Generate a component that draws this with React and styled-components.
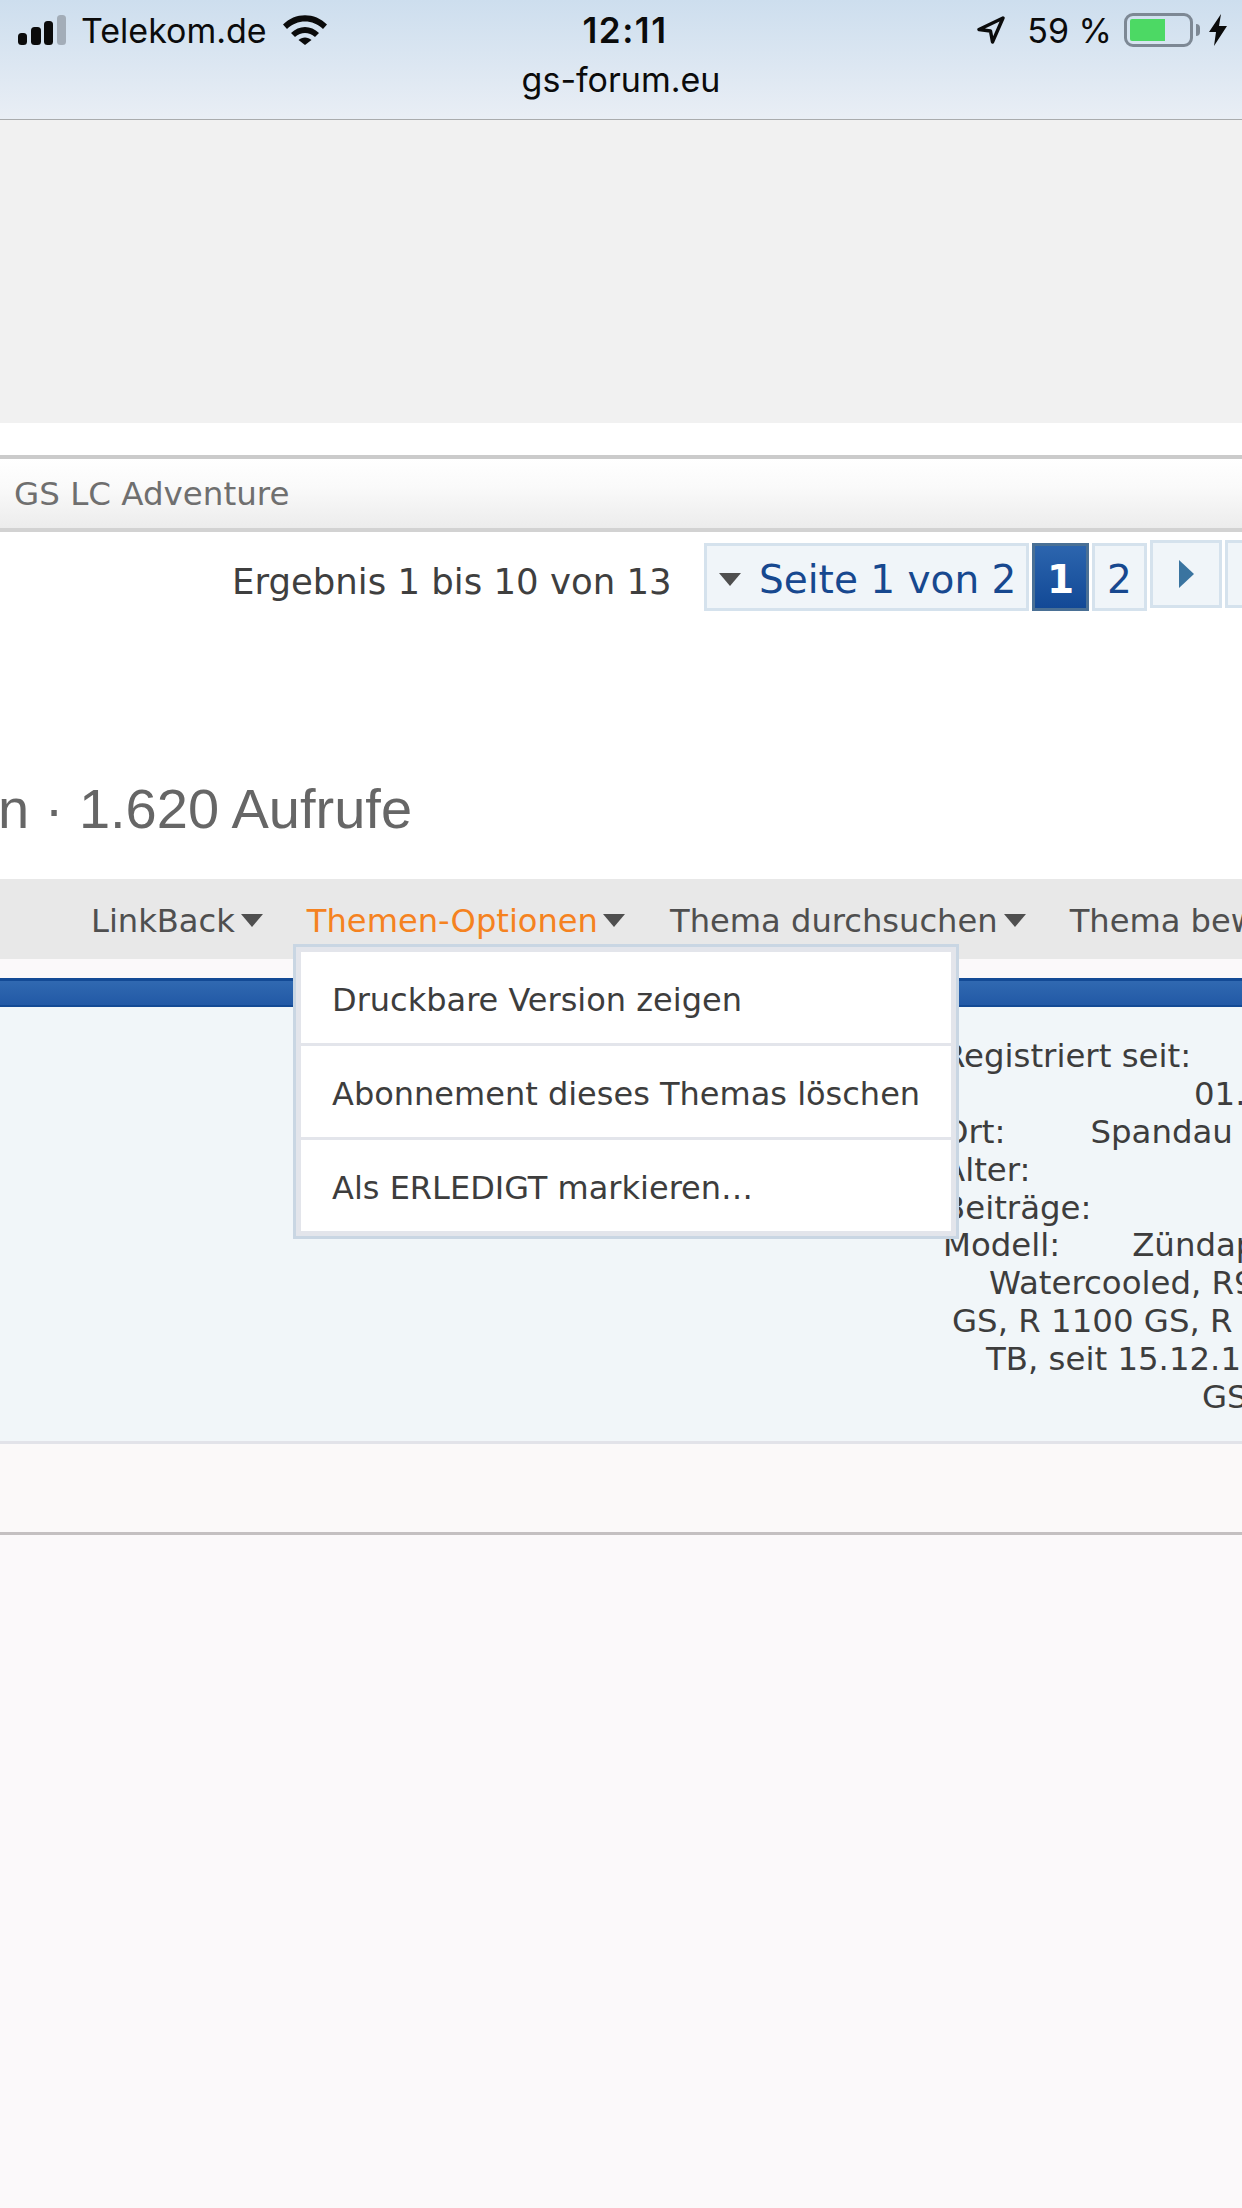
import React from 'react'
import styled, { createGlobalStyle } from 'styled-components'

const GlobalStyle = createGlobalStyle`
  html, body {
    margin: 0;
    padding: 0;
    background: #fbf9fa;
  }
`

const Page = styled.div`
  width: 1242px;
  height: 2208px;
  overflow: hidden;
  position: relative;
  background: #fbf9fa;
  font-family: "DejaVu Sans", Verdana, sans-serif;
  font-size: 32px;
  color: #3d3d3d;
`

const StatusBar = styled.div`
  height: 120px;
  box-sizing: border-box;
  background: linear-gradient(#cddeee, #e9eef5);
  border-bottom: 1px solid #a9abad;
  font-family: Inter, "Liberation Sans", sans-serif;
  color: #0b0b0b;
`

const StatusRow = styled.div`
  display: grid;
  grid-template-columns: 1fr auto 1fr;
  height: 60px;
  align-items: center;
`

const StatusSide = styled.div`
  display: flex;
  align-items: center;
  justify-content: ${props => props.right ? 'flex-end' : 'flex-start'};
  padding: ${props => props.right ? '0 15px 0 0' : '0 0 0 18px'};
  font-size: 34px;
`

const Clock = styled.div`
  font-size: 35px;
  font-weight: 600;
  letter-spacing: 1.5px;
  margin-left: 8px;
`

const SiteName = styled.div`
  text-align: center;
  font-size: 34px;
  line-height: 40px;
`

const Carrier = styled.span`
  margin: 0 16px 0 15px;
`

const Percent = styled.span`
  margin: 0 12px 0 22px;
`

const Battery = styled.div`
  width: 69px;
  height: 34px;
  box-sizing: border-box;
  border: 3px solid #7d8894;
  border-radius: 9px;
  padding: 3px;
`

const BatteryFill = styled.div`
  width: ${props => props.level}%;
  height: 100%;
  background: #4cd964;
  border-radius: 2px 0 0 2px;
`

const BatteryNub = styled.div`
  width: 4px;
  height: 12px;
  margin: 0 9px 0 3px;
  background: #7d8894;
  border-radius: 0 4px 4px 0;
`

const AdArea = styled.div`
  height: 303px;
  background: #f1f1f1;
`

const Spacer = styled.div`
  height: ${props => props.size}px;
  background: #fff;
`

const Breadcrumb = styled.div`
  height: 77px;
  box-sizing: border-box;
  padding-left: 14px;
  display: flex;
  align-items: center;
  background: linear-gradient(#fff, #fafafa 40%, #ececec);
  border-top: 4px solid #cbcbcb;
  border-bottom: 4px solid #d2d2d2;
  color: #6f6f6f;
  font-size: 32.5px;
`

const PagerRow = styled.div`
  height: 347px;
  box-sizing: border-box;
  background: #fff;
  padding: 8px 0 0 232px;
  display: flex;
  align-items: flex-start;
  white-space: nowrap;
`

const ResultCount = styled.div`
  flex: none;
  width: 439px;
  line-height: 68px;
  margin: 8px 30px 0 0;
  font-size: 35.5px;
  color: #3f3f3f;
`

const PageBox = styled.div`
  box-sizing: border-box;
  height: 68px;
  flex: 0 0 ${props => props.width}px;
  margin: ${props => props.raised ? '0' : '3px'} 0 0 3px;
  border: 3px solid ${props => props.active ? '#4a7095' : '#d5e2ed'};
  background: ${props => props.active ? 'linear-gradient(#2c65ae, #124996)' : '#f0f5f9'};
  color: ${props => props.active ? '#fff' : '#17488f'};
  font-size: 39px;
  font-weight: ${props => props.active ? 700 : 400};
  display: flex;
  align-items: center;
  justify-content: ${props => props.left ? 'flex-start' : 'center'};
  padding-left: ${props => props.left ? '12px' : '0'};
  padding-top: ${props => props.raised ? '0' : '4px'};
  overflow: hidden;
`

const Caret = styled.i`
  display: block;
  flex: none;
  width: 0;
  height: 0;
  border-left: 11px solid transparent;
  border-right: 11px solid transparent;
  border-top: 13px solid #4f4f4f;
  margin: ${props => props.spaced};
  filter: blur(0.6px);
`

const NextArrow = styled.i`
  display: block;
  width: 0;
  height: 0;
  border-top: 14px solid transparent;
  border-bottom: 14px solid transparent;
  border-left: 15px solid #3a74a0;
  filter: blur(0.6px);
`

const EdgeMark = styled.i`
  display: block;
  width: 6px;
  height: 24px;
  margin-left: 14px;
  flex: none;
  background: #c5d3de;
`

const StatsHeading = styled.div`
  position: absolute;
  left: -2px;
  top: 773px;
  font-family: "Liberation Sans", Arial, sans-serif;
  font-size: 56px;
  line-height: 72px;
  color: #666;
  white-space: nowrap;
`

const ToolbarWrap = styled.div`
  position: relative;
`

const Toolbar = styled.div`
  height: 80px;
  box-sizing: border-box;
  background: #e8e8e8;
  padding: 3px 0 0 91px;
  display: flex;
  align-items: center;
  white-space: nowrap;
  color: #4f4f4f;
  font-size: 32.15px;
`

const ToolItem = styled.div`
  display: flex;
  align-items: center;
  color: ${props => props.active ? '#f58220' : 'inherit'};
`

const Dropdown = styled.div`
  position: absolute;
  left: 293px;
  top: 65px;
  width: 666px;
  box-sizing: border-box;
  border: 3px solid #c9d6e3;
  padding: 5px;
  background: #e3e5eb;
  display: flex;
  flex-direction: column;
  gap: 3px;
  z-index: 2;
`

const DropdownRow = styled.div`
  height: 91px;
  box-sizing: border-box;
  padding: 5px 0 0 31px;
  display: flex;
  align-items: center;
  background: #fff;
  white-space: nowrap;
  color: #3d3d3d;
`

const BlueBar = styled.div`
  height: 29px;
  box-sizing: border-box;
  margin-top: 19px;
  background: linear-gradient(#3069b1, #2259a6);
  border-top: 3px solid #134a95;
  border-bottom: 2px solid #134a95;
`

const PostBody = styled.div`
  height: 437px;
  box-sizing: border-box;
  background: #f1f6f9;
  border-bottom: 3px solid #e2e3e9;
  padding: 30px 0 0 943px;
  font-size: 32.4px;
`

const UserLine = styled.div`
  height: 37.9px;
  line-height: 38px;
  padding-left: ${props => props.indent || 0}px;
  white-space: nowrap;
  color: #3d3d3d;
`

const Value = styled.span`
  margin-left: ${props => props.gap}px;
`

const Footer = styled.div`
  height: 91px;
  box-sizing: border-box;
  border-bottom: 3px solid #c4c0c1;
  background: #fbf9f9;
`

const SignalIcon = () => (
  <svg width="48" height="30" viewBox="0 0 48 30">
    <rect x="0" y="18" width="9" height="12" rx="3.5" fill="#0b0b0b" />
    <rect x="13" y="12" width="10" height="18" rx="3.5" fill="#0b0b0b" />
    <rect x="26" y="6" width="9" height="24" rx="3.5" fill="#0b0b0b" />
    <rect x="39" y="0" width="9" height="30" rx="3.5" fill="#a3adb8" />
  </svg>
)

const WifiIcon = () => (
  <svg width="44" height="30" viewBox="0 0 44 30">
    <path d="M0 9.500C12-3 32-3 44 9.500L40 14C30 4 14 4 4 14Z" fill="#0b0b0b" />
    <path d="M8 18C16 10 28 10 36 18L32 22C26 16.500 18 16.500 12 22Z" fill="#0b0b0b" />
    <path d="M15.500 25C19 21.500 25 21.500 28.500 25L22 30Z" fill="#0b0b0b" />
  </svg>
)

const LocationIcon = () => (
  <svg width="28" height="28" viewBox="0 0 28 28">
    <path d="M26 2L2 13.500L13.500 15L15.500 26Z" fill="none" stroke="#0b0b0b" strokeWidth="3.4" strokeLinejoin="round" />
  </svg>
)

const BoltIcon = () => (
  <svg width="18" height="32" viewBox="0 0 18 32">
    <path d="M12 0L0 18H7L5 32L18 12H10Z" fill="#0b0b0b" />
  </svg>
)

export default function App() {
  return (
    <Page>
      <GlobalStyle />
      <StatusBar>
        <StatusRow>
          <StatusSide>
            <SignalIcon />
            <Carrier>Telekom.de</Carrier>
            <WifiIcon />
          </StatusSide>
          <Clock>12:11</Clock>
          <StatusSide right>
            <LocationIcon />
            <Percent>59 %</Percent>
            <Battery><BatteryFill level={62} /></Battery>
            <BatteryNub />
            <BoltIcon />
          </StatusSide>
        </StatusRow>
        <SiteName>gs-forum.eu</SiteName>
      </StatusBar>

      <AdArea />
      <Spacer size={32} />
      <Breadcrumb>GS LC Adventure</Breadcrumb>

      <PagerRow>
        <ResultCount>Ergebnis 1 bis 10 von 13</ResultCount>
        <PageBox width={325} left><Caret spaced="0 18px 0 0" />Seite 1 von 2</PageBox>
        <PageBox width={57} active>1</PageBox>
        <PageBox width={55}>2</PageBox>
        <PageBox width={72} raised><NextArrow /></PageBox>
        <PageBox width={40} raised left><EdgeMark /></PageBox>
      </PagerRow>
      <StatsHeading>n · 1.620 Aufrufe</StatsHeading>

      <ToolbarWrap>
        <Toolbar>
          <ToolItem>LinkBack<Caret spaced="0 44px 0 6px" /></ToolItem>
          <ToolItem active>Themen-Optionen<Caret spaced="0 45px 0 5px" /></ToolItem>
          <ToolItem>Thema durchsuchen<Caret spaced="0 44px 0 6px" /></ToolItem>
          <ToolItem>Thema bewerten</ToolItem>
        </Toolbar>
        <Dropdown>
          <DropdownRow>Druckbare Version zeigen</DropdownRow>
          <DropdownRow>Abonnement dieses Themas löschen</DropdownRow>
          <DropdownRow>Als ERLEDIGT markieren…</DropdownRow>
        </Dropdown>
      </ToolbarWrap>

      <BlueBar />
      <PostBody>
        <UserLine>Registriert seit:</UserLine>
        <UserLine indent={251}>01.</UserLine>
        <UserLine>Ort:<Value gap={85}>Spandau</Value></UserLine>
        <UserLine>Alter:</UserLine>
        <UserLine>Beiträge:</UserLine>
        <UserLine>Modell:<Value gap={72}>Zündapp</Value></UserLine>
        <UserLine indent={46}>Watercooled, R9</UserLine>
        <UserLine indent={9}>GS, R 1100 GS, R</UserLine>
        <UserLine indent={43}>TB, seit 15.12.1</UserLine>
        <UserLine indent={259}>GS</UserLine>
      </PostBody>
      <Footer />
    </Page>
  )
}
